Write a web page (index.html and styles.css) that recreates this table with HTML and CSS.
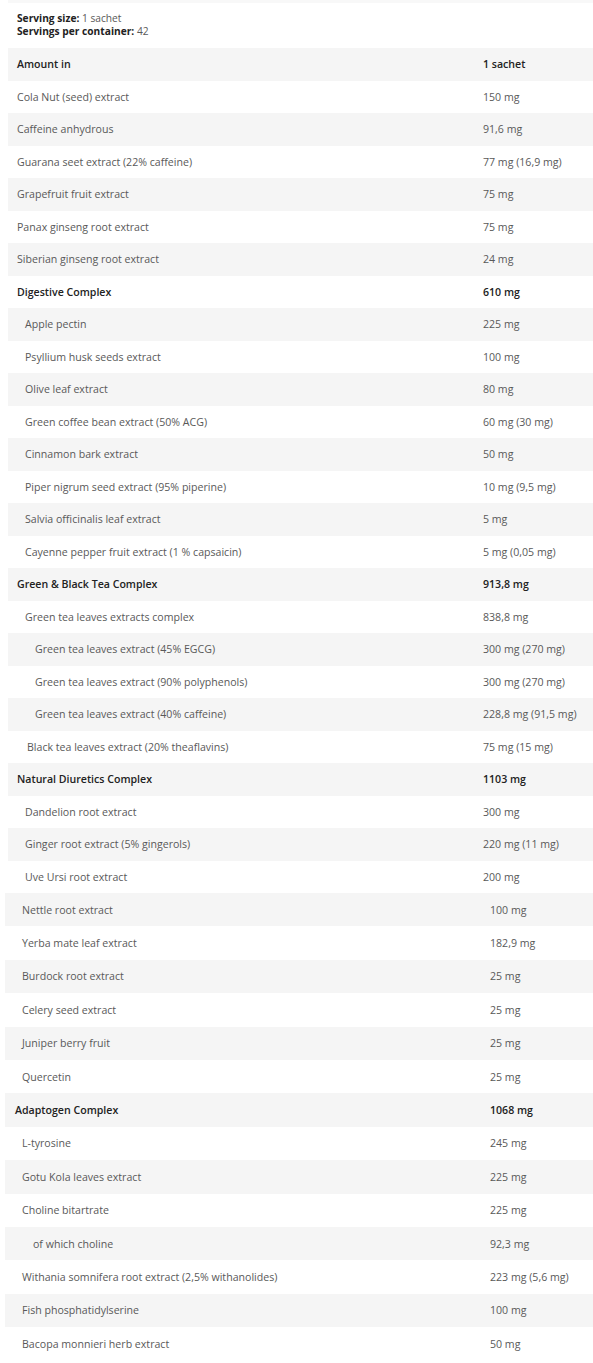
FILE: index.html
```html
<!DOCTYPE html>
<html>
<head>
<meta charset="utf-8">
<link rel="stylesheet" href="styles.css">
</head>
<body>
<div class="page">
  <div class="topline"></div>
  <div class="serving">
    <div><b>Serving size:</b> 1 sachet</div>
    <div><b>Servings per container:</b> 42</div>
  </div>
  <table class="facts t1">
    <tr class="bold"><td>Amount in</td><td>1 sachet</td></tr>
    <tr><td>Cola Nut (seed) extract</td><td>150 mg</td></tr>
    <tr><td>Caffeine anhydrous</td><td>91,6 mg</td></tr>
    <tr><td>Guarana seet extract (22% caffeine)</td><td>77 mg (16,9 mg)</td></tr>
    <tr><td>Grapefruit fruit extract</td><td>75 mg</td></tr>
    <tr><td>Panax ginseng root extract</td><td>75 mg</td></tr>
    <tr><td>Siberian ginseng root extract</td><td>24 mg</td></tr>
    <tr class="bold"><td>Digestive Complex</td><td>610 mg</td></tr>
    <tr class="l1"><td>Apple pectin</td><td>225 mg</td></tr>
    <tr class="l1"><td>Psyllium husk seeds extract</td><td>100 mg</td></tr>
    <tr class="l1"><td>Olive leaf extract</td><td>80 mg</td></tr>
    <tr class="l1"><td>Green coffee bean extract (50% ACG)</td><td>60 mg (30 mg)</td></tr>
    <tr class="l1"><td>Cinnamon bark extract</td><td>50 mg</td></tr>
    <tr class="l1"><td>Piper nigrum seed extract (95% piperine)</td><td>10 mg (9,5 mg)</td></tr>
    <tr class="l1"><td>Salvia officinalis leaf extract</td><td>5 mg</td></tr>
    <tr class="l1"><td>Cayenne pepper fruit extract (1 % capsaicin)</td><td>5 mg (0,05 mg)</td></tr>
    <tr class="bold"><td>Green &amp; Black Tea Complex</td><td>913,8 mg</td></tr>
    <tr class="l1"><td>Green tea leaves extracts complex</td><td>838,8 mg</td></tr>
    <tr class="l2"><td>Green tea leaves extract (45% EGCG)</td><td>300 mg (270 mg)</td></tr>
    <tr class="l2"><td>Green tea leaves extract (90% polyphenols)</td><td>300 mg (270 mg)</td></tr>
    <tr class="l2"><td>Green tea leaves extract (40% caffeine)</td><td>228,8 mg (91,5 mg)</td></tr>
    <tr class="l1b"><td>Black tea leaves extract (20% theaflavins)</td><td>75 mg (15 mg)</td></tr>
    <tr class="bold"><td>Natural Diuretics Complex</td><td>1103 mg</td></tr>
    <tr class="l1"><td>Dandelion root extract</td><td>300 mg</td></tr>
    <tr class="l1"><td>Ginger root extract (5% gingerols)</td><td>220 mg (11 mg)</td></tr>
    <tr class="l1"><td>Uve Ursi root extract</td><td>200 mg</td></tr>
  </table>
  <table class="facts t2">
    <tr><td>Nettle root extract</td><td>100 mg</td></tr>
    <tr><td>Yerba mate leaf extract</td><td>182,9 mg</td></tr>
    <tr><td>Burdock root extract</td><td>25 mg</td></tr>
    <tr><td>Celery seed extract</td><td>25 mg</td></tr>
    <tr><td>Juniper berry fruit</td><td>25 mg</td></tr>
    <tr><td>Quercetin</td><td>25 mg</td></tr>
    <tr class="bold"><td>Adaptogen Complex</td><td>1068 mg</td></tr>
    <tr><td>L-tyrosine</td><td>245 mg</td></tr>
    <tr><td>Gotu Kola leaves extract</td><td>225 mg</td></tr>
    <tr><td>Choline bitartrate</td><td>225 mg</td></tr>
    <tr class="l2"><td>of which choline</td><td>92,3 mg</td></tr>
    <tr><td>Withania somnifera root extract (2,5% withanolides)</td><td>223 mg (5,6 mg)</td></tr>
    <tr><td>Fish phosphatidylserine</td><td>100 mg</td></tr>
    <tr><td>Bacopa monnieri herb extract</td><td>50 mg</td></tr>
  </table>
</div>
</body>
</html>
```

FILE: styles.css
```css
html, body {
  margin: 0;
  padding: 0;
  background: #ffffff;
}

.page {
  width: 593px;
  font-family: "Open Sans", "Liberation Sans", sans-serif;
  font-size: 10px;
  color: #595959;
}

.topline {
  height: 3px;
  margin-left: 8px;
  background: #f8f8f8;
}

.serving {
  padding: 9px 0 0 17px;
  height: 36px;
  line-height: 13px;
  font-size: 10.2px;
}

.serving b {
  color: #222222;
  font-weight: 700;
}

.facts {
  border-collapse: collapse;
  border-spacing: 0;
  table-layout: fixed;
  font-size: 10.6px;
}

.facts td {
  padding: 0;
  vertical-align: middle;
  white-space: nowrap;
}

.t1 {
  margin-left: 8px;
  width: 585px;
}

.t1 tr {
  height: 32.5px;
}

.t1 tr:nth-child(odd) {
  background: #f5f5f5;
}

.t1 td:first-child {
  width: 466px;
  padding-left: 9px;
}

.t1 tr.l1 td:first-child {
  padding-left: 17px;
}

.t1 tr.l1b td:first-child {
  padding-left: 19px;
}

.t1 tr.l2 td:first-child {
  padding-left: 27px;
}

.t2 {
  margin-left: 5px;
  width: 588px;
}

.t2 tr {
  height: 33.4px;
}

.t2 tr:nth-child(odd) {
  background: #f5f5f5;
}

.t2 td:first-child {
  width: 468px;
  padding-left: 17px;
}

.t2 tr.bold td:first-child {
  padding-left: 10px;
}

.t2 tr.l2 td:first-child {
  padding-left: 28px;
}

.facts tr.bold td {
  color: #222222;
  font-weight: 600;
}
```
